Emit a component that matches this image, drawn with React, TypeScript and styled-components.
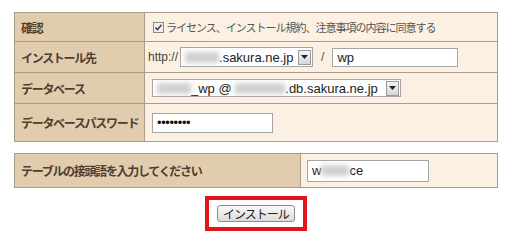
import React from "react";
import styled, {createGlobalStyle} from "styled-components";

const GlobalStyle = createGlobalStyle`
  body {
    margin: 0;
    background: #fff;
    font-family: "Liberation Sans", "Noto Sans CJK JP", sans-serif;
  }
`;

const Page = styled.div`
  width: 484px;
  padding: 12px 0 0 14px;
`;

const FormTable = styled.div<{ $label: number; $rows: string }>`
  display: grid;
  grid-template-columns: ${p => p.$label}px 1fr;
  grid-template-rows: ${p => p.$rows};
  gap: 1px;
  padding: 1px;
  background: #aa9c8a;
`;

const Label = styled.div`
  display: flex;
  align-items: center;
  padding-left: 6px;
  background: #e2ccae;
  color: #4d3e30;
  font-family: "Noto Sans CJK JP", sans-serif;
  font-weight: 700;
  font-size: 12px;
  letter-spacing: -1.3px;
`;

const Value = styled.div<{ $pad?: number }>`
  display: flex;
  align-items: center;
  padding-left: ${p => p.$pad ?? 7}px;
  background: #fcf0e2;
  color: #333;
  font-size: 12px;
`;

const Check = styled.span`
  display: inline-flex;
  align-items: center;
  justify-content: center;
  width: 9px;
  height: 9px;
  margin-right: 2px;
  border: 1px solid #8a8a8a;
  background: #f0f0f0;
`;

const Note = styled.span`
  font-family: "Noto Sans CJK JP", sans-serif;
  font-size: 11px;
  letter-spacing: -1px;
  color: #555;
`;

const Small = styled.span`
  color: #444;
  font-size: 12px;
  margin-right: 2px;
`;

const Box = styled.div<{ $w: number; $h: number }>`
  display: flex;
  align-items: center;
  box-sizing: border-box;
  width: ${p => p.$w}px;
  height: ${p => p.$h}px;
  padding-left: 4px;
  border: 1px solid #a5a5a5;
  background: #fff;
  color: #222;
  font-size: 13px;
`;

const Blur = styled.span<{ $w: number }>`
  display: inline-block;
  width: ${p => p.$w}px;
  height: 11px;
  background: #d0d0d0;
  filter: blur(2.5px);
`;

const Arrow = styled.span`
  display: flex;
  align-items: center;
  justify-content: center;
  width: 13px;
  height: 15px;
  margin-left: auto;
  margin-right: 1px;
  background: linear-gradient(#f4f4f4, #d6d6d6);
  border: 1px solid #9a9a9a;
  box-sizing: border-box;
`;

const Slash = styled.span`
  margin: 0 8px;
  color: #555;
  font-size: 12px;
`;

const Dots = styled.span`
  font-size: 13px;
  letter-spacing: -0.4px;
  color: #111;
`;

const ButtonRow = styled.div`
  display: flex;
  justify-content: center;
  margin-top: 8px;
`;

const Highlight = styled.div`
  padding: 5px 8px 4px;
  border: 4px solid #e0141a;
`;

const Button = styled.button`
  width: 78px;
  height: 17px;
  padding: 0;
  border: 1px solid #8c8c8c;
  border-radius: 3px;
  background: linear-gradient(#fafafa, #dcdcdc);
  color: #222;
  font-family: "Noto Sans CJK JP", sans-serif;
  font-size: 12px;
  letter-spacing: -1px;
  line-height: 15px;
`;

const DropArrow = () => (
  <Arrow>
    <svg width="7" height="4" viewBox="0 0 7 4">
      <path d="M0 0h7L3.5 4z" fill="#222"/>
    </svg>
  </Arrow>
);

const App: React.FunctionComponent = () => (
  <Page>
    <GlobalStyle/>
    <FormTable $label={129} $rows="28px 30px 30px 37px">
      <Label>確認</Label>
      <Value $pad={8}>
        <Check>
          <svg width="7" height="7" viewBox="0 0 7 7">
            <path d="M0.5 3.5l2 2.2L6.5 0.8" stroke="#333" strokeWidth="1.4" fill="none"/>
          </svg>
        </Check>
        <Note>ライセンス、インストール規約、注意事項の内容に同意する</Note>
      </Value>
      <Label>インストール先</Label>
      <Value $pad={3}>
        <Small>http://</Small>
        <Box $w={133} $h={20}>
          <Blur $w={34}/>
          <span>.sakura.ne.jp</span>
          <DropArrow/>
        </Box>
        <Slash>/</Slash>
        <Box $w={126} $h={19}>wp</Box>
      </Value>
      <Label>データベース</Label>
      <Value>
        <Box $w={249} $h={18}>
          <Blur $w={34}/>
          <span>_wp @&nbsp;</span>
          <Blur $w={50}/>
          <span>.db.sakura.ne.jp</span>
          <DropArrow/>
        </Box>
      </Value>
      <Label>データベースパスワード</Label>
      <Value>
        <Box $w={121} $h={20}>
          <Dots>••••••••</Dots>
        </Box>
      </Value>
    </FormTable>
    <div style={{height: 11}}/>
    <FormTable $label={285} $rows="33px">
      <Label>テーブルの接頭語を入力してください</Label>
      <Value $pad={6}>
        <Box $w={122} $h={22}>
          <span>w</span>
          <Blur $w={28}/>
          <span>ce</span>
        </Box>
      </Value>
    </FormTable>
    <ButtonRow>
      <Highlight>
        <Button>インストール</Button>
      </Highlight>
    </ButtonRow>
  </Page>
);

export default App;
